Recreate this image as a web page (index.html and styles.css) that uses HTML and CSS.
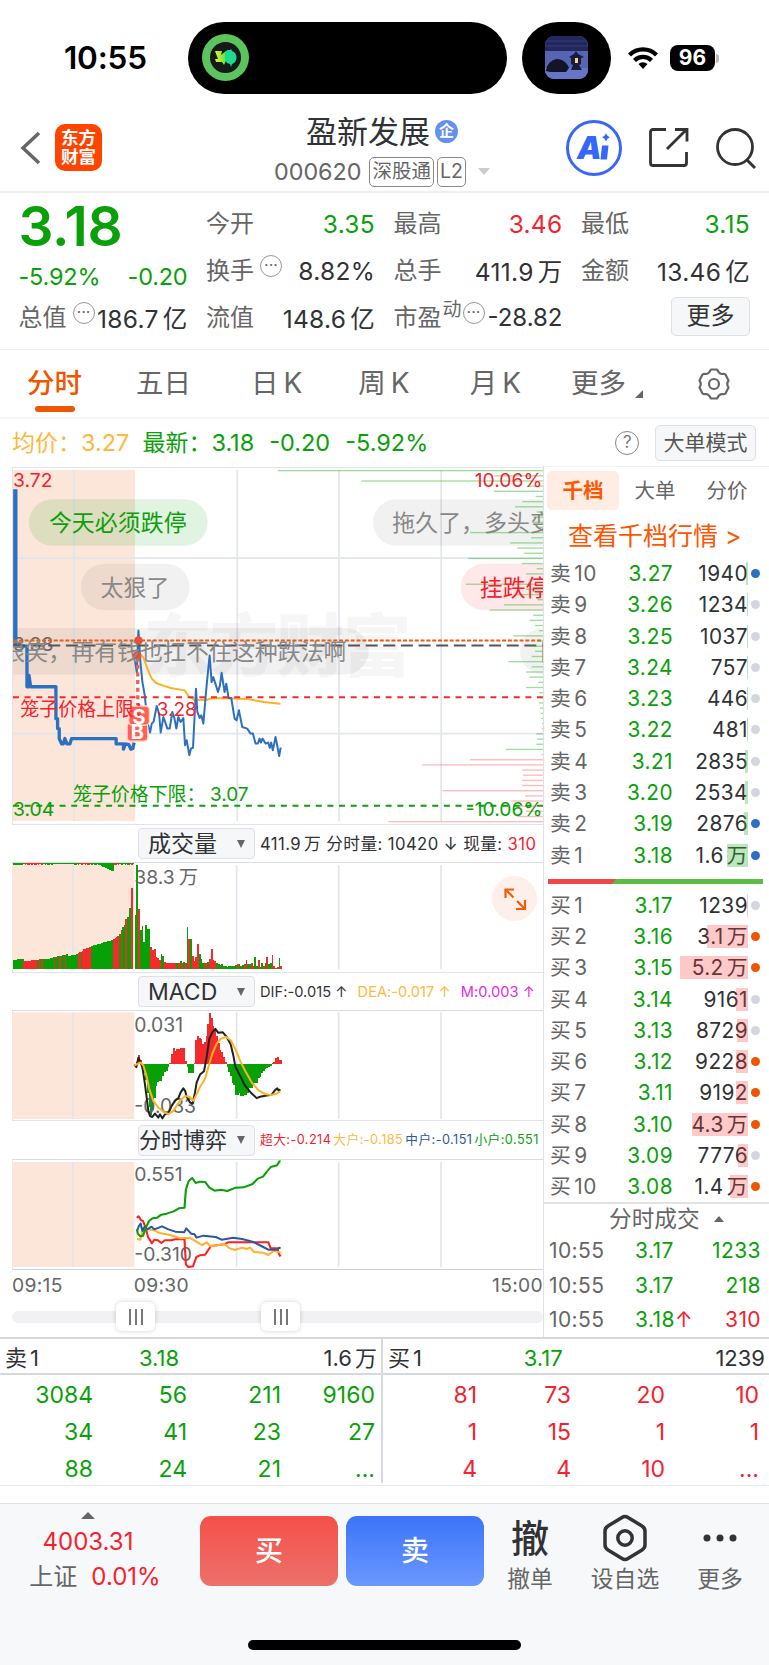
FILE: index.html
```html
<!DOCTYPE html>
<html lang="zh-CN">

<head>
    <meta charset="UTF-8">
    <meta name="viewport" content="width=device-width, initial-scale=1.0">
    <title>盈新发展 000620</title>
    <link rel="stylesheet" href="styles.css">
</head>

<body>
    <!-- Status bar -->
    <div class="status-bar">
        <span class="clock">10:55</span>
        <div class="island">
            <svg width="47" height="47" viewBox="0 0 47 47">
                <defs>
                    <linearGradient id="bolt" x1="0" x2="1">
                        <stop offset="0" stop-color="#e6f21c" />
                        <stop offset="1" stop-color="#5fe052" />
                    </linearGradient>
                </defs>
                <circle cx="23.500" cy="23.500" r="23.500" fill="#5cc45c" />
                <circle cx="23.500" cy="23.500" r="15.500" fill="#17181a" />
                <path d="M13 17h7l-1 4 5-4v10l-2 4-2-3h-6l-1-3h3z" fill="url(#bolt)" />
                <path d="M25 16h3l1-1 1 2c6 2 6 11 0 13l-1 3-1-3-3-1-2-3v-7z" fill="#1fdc8c" />
            </svg>
        </div>
        <div class="island-small">
            <svg width="43" height="43" viewBox="0 0 43 43">
                <defs>
                    <clipPath id="thumb"><rect width="43" height="43" rx="9" /></clipPath>
                </defs>
                <g clip-path="url(#thumb)">
                    <rect width="43" height="43" fill="#5565b4" />
                    <rect width="43" height="15" fill="#22285c" />
                    <path d="M0 5h43M0 10h43" stroke="#343b78" />
                    <rect y="32" width="43" height="11" fill="#6675c6" />
                    <path d="M1 35c1-7 5-11 11-12 6 0 10 4 12 9l-3 4H5z" fill="#131526" />
                    <path d="M24 21l5-3 2-3 2 3 6 3-3 1v6l-2 1 3 5h-11l2-5-2-1v-6z" fill="#191b3a" />
                    <rect x="30" y="22" width="3" height="5" fill="#ffcf87" />
                </g>
            </svg>
        </div>
        <svg class="wifi" width="32" height="24" viewBox="0 0 32 24">
            <path d="M2.500 9a19 19 0 0 1 27 0M7.500 14.500a12 12 0 0 1 17 0" fill="none" stroke="#000" stroke-width="4.200" />
            <path d="M16 23l-4.500-5a6.500 6.500 0 0 1 9 0z" />
        </svg>
        <span class="battery">96</span>
        <span class="battery-tip"></span>
    </div>

    <!-- Stock header -->
    <div class="header">
        <svg class="back" width="22" height="36" viewBox="0 0 22 36">
            <path d="M19 3L3 18l16 15" fill="none" stroke="#666" stroke-width="3.500" />
        </svg>
        <div class="logo">东方<br>财富</div>
        <div class="title-box">
            <div class="title">盈新发展<span class="badge">企</span></div>
            <div class="code">000620<span class="tag">深股通</span><span class="tag tag-l2">L2</span><i class="tri-down light"></i></div>
        </div>
        <svg width="56" height="56" viewBox="0 0 56 56">
            <circle cx="28" cy="28" r="26.500" fill="none" stroke="#3767fa" stroke-width="3" />
            <text class="ai" x="11" y="38.500">A</text>
            <path d="M36 25.500h6.500l-1.500 14H34.500z" fill="#3767fa" />
            <path d="M40 13q1 3.500 4 4-3 1-4 4.500-1-3.500-4-4.500 3-.500 4-4z" fill="#3767fa" />
        </svg>
        <svg class="share" width="42" height="42" viewBox="0 0 42 42">
            <path d="M18 2.500H5Q2.500 2.500 2.500 5v31q0 2.500 2.500 2.500h31q2.500 0 2.500-2.500V25M27 2.500h12v12M38 3L19 22" fill="none" stroke="#333" stroke-width="2.800" />
        </svg>
        <svg class="search" width="44" height="44" viewBox="0 0 44 44">
            <circle cx="20" cy="21" r="17.500" fill="none" stroke="#333" stroke-width="2.800" />
            <path d="M32 34l8 8" stroke="#333" stroke-width="3" />
        </svg>
    </div>

    <!-- Quote summary -->
    <div class="quote">
        <div class="quote-col">
            <div class="last-price">3.18</div>
            <div class="item change green"><span>-5.92%</span><span>-0.20</span></div>
            <div class="item"><label>总值<i class="dots near">···</i></label><span>186.7<em>亿</em></span></div>
        </div>
        <div class="quote-col">
            <div class="item"><label>今开</label><span class="green">3.35</span></div>
            <div class="item"><label>换手<i class="dots">···</i></label><span>8.82%</span></div>
            <div class="item"><label>流值</label><span>148.6<em>亿</em></span></div>
        </div>
        <div class="quote-col">
            <div class="item"><label>最高</label><span class="red">3.46</span></div>
            <div class="item"><label>总手</label><span>411.9<em>万</em></span></div>
            <div class="item"><label>市盈<sup>动</sup><i class="dots">···</i></label><span class="pe">-28.82</span></div>
        </div>
        <div class="quote-col">
            <div class="item"><label>最低</label><span class="green">3.15</span></div>
            <div class="item"><label>金额</label><span>13.46<em>亿</em></span></div>
            <div class="item more-item"><button class="more-btn">更多</button></div>
        </div>
    </div>

    <!-- Period tabs -->
    <div class="tabs">
        <span class="tab active">分时</span>
        <span class="tab">五日</span>
        <span class="tab">日<b>K</b></span>
        <span class="tab">周<b>K</b></span>
        <span class="tab">月<b>K</b></span>
        <span class="tab">更多<i class="corner"></i></span>
        <svg width="34" height="34" viewBox="0 0 34 34">
            <path d="M14 2.500h6q2 4 4.500 4.500 3-.5 4 .5l3 6q-2.500 3.500 0 7l-3 6q-1 1-4 .5-2.500.5-4.500 4.500h-6q-2-4-4.500-4.500-3 .5-4-.5l-3-6q2.500-3.500 0-7l3-6q1-1 4-.5 2.500-.5 4.500-4.500z" fill="none" stroke="#666" stroke-width="2.200" stroke-linejoin="round" />
            <circle cx="17" cy="17" r="5" fill="none" stroke="#666" stroke-width="2.200" />
        </svg>
    </div>

    <div class="info-row">
        <span class="yellow">均价：<b>3.27</b></span>
        <span class="green latest">最新：<b>3.18</b><b>-0.20</b><b>-5.92%</b></span>
        <span class="help">?</span>
        <button class="mode-btn">大单模式</button>
    </div>

    <div class="main">
        <div class="charts">
            <!-- Price chart -->
            <svg class="price-chart" viewBox="36 36 1593 1071" preserveAspectRatio="none">
                <rect class="shade" x="36" y="42" width="367" height="1056" />
                <g class="grid">
                    <path d="M219 42V1098M710 42V1098M1016 42V1098M1323 42V1098M36 307H1629M36 835H1629" />
                </g>
                <text class="watermark" x="428" y="646" textLength="805">东方财富</text>
                <g class="bullets">
                    <rect class="pill-green" x="84" y="130" width="537" height="140" rx="70" />
                    <rect class="pill-gray" x="240" y="324" width="327" height="140" rx="70" />
                    <rect class="pill-gray" x="-80" y="517" width="1185" height="140" rx="70" />
                    <rect class="pill-gray" x="1118" y="130" width="700" height="140" rx="70" />
                    <rect class="pill-red" x="1382" y="324" width="400" height="140" rx="70" />
                    <rect class="pill-gray" x="1560" y="517" width="400" height="140" rx="70" />
                </g>
                <text class="axis gray" x="36" y="588">3.38</text>
                <path class="avg-line" d="M404 598L418 596L428 606L440 640L452 668L465 682L485 690L510 698L552 705L565 724L580 733L615 734L640 728L740 731L790 740L840 745" />
                <path class="pre-line first" d="M43 100V572" />
                <path class="pre-line" d="M43 572H78V694H84V660L89 694H165V790H170V820H175V850L182 866H187L192 850L198 866H207L212 850H346V866H368V882L374 866L384 868L390 882L396 880L400 862" />
                <path class="price-line" d="M403 618L408 650L413 525L419 620L425 680L432 720L440 800L448 832L453 805L459 798L468 752L475 775L480 832L488 785L494 802L500 820L507 820L515 770L521 788L527 820L533 785L540 800L548 788L553 870L558 855L566 900L571 880L577 878L586 700L590 770L597 788L602 780L608 805L618 690L627 600L633 680L638 665L646 690L652 710L658 690L663 652L668 685L672 710L677 685L684 728L692 728L702 790L708 795L715 765L725 815L740 820L750 835L757 835L765 865L772 865L777 850L781 862L786 850L795 865L803 862L808 878L812 862L817 885L821 866L825 845L829 865L836 903L840 880H843" />
                <path d="M36 570H1629" stroke="#555" stroke-width="6" stroke-dasharray="36 17" />
                <path d="M36 555H1629" stroke="#ee5a10" stroke-width="6" stroke-dasharray="12 5.500" />
                <path d="M36 726H1629" stroke="#f02a30" stroke-width="6" stroke-dasharray="18 17" />
                <path d="M36 1052H1629" stroke="#0aa00a" stroke-width="6" stroke-dasharray="18 17" />
                <path d="M411 605V760" stroke="#f06050" stroke-width="10" stroke-dasharray="12 11" />
                <circle cx="413" cy="555" r="13" fill="#e8503e" />
                <circle cx="409" cy="600" r="13" fill="#e8503e" />
                <g class="mark">
                    <rect x="379" y="803" width="62" height="55" rx="12" />
                    <rect x="384" y="752" width="62" height="58" rx="12" />
                    <text x="410" y="851">B</text>
                    <text x="415" y="805">S</text>
                </g>
                <g id="depth"></g>
                <g class="bullet-text">
                    <text class="green" x="144" y="226">今天必须跌停</text>
                    <text x="299" y="420">太狠了</text>
                    <text x="4" y="613">很笑，再有钱也扛不住这种跌法啊</text>
                    <text x="1176" y="226">拖久了，多头变</text>
                    <text class="red" x="1439" y="420">挂跌停</text>
                    <text x="1616" y="613">目</text>
                </g>
                <text class="axis red" x="36" y="94">3.72</text>
                <text class="axis red" x="1627" y="94" text-anchor="end">10.06%</text>
                <text class="axis green" x="36" y="1082">3.04</text>
                <text class="axis green" x="1627" y="1082" text-anchor="end">-10.06%</text>
                <text class="limit red" x="58" y="783">笼子价格上限：<tspan x="468">3.28</tspan></text>
                <text class="limit green" x="216" y="1038">笼子价格下限：<tspan x="628">3.07</tspan></text>
            </svg>

            <!-- Volume -->
            <div class="sub-head">
                <span class="select"><span>成交量</span><i class="tri-down"></i></span>
                <span class="sub-info vol-info">411.9<em>万</em> 分时量: 10420 ↓ 现量: <b class="red">310</b></span>
            </div>
            <div class="sub-chart vol-chart">
                <svg viewBox="36 126 1593 333" preserveAspectRatio="none">
                    <rect class="shade" x="36" y="126" width="367" height="324" />
                    <path class="grid" d="M219 132V450M710 132V450M1016 132V450M1323 132V450" />
                    <g id="volume" shape-rendering="crispEdges"></g>
                    <text class="axis gray" x="403" y="190">38.3<tspan dx="12">万</tspan></text>
                </svg>
                <div class="expand">
                    <svg width="24" height="24" viewBox="0 0 24 24">
                        <path d="M2.500 11V2.500H11M3 3l7.500 7.500M22 13v9h-9M21.500 21.500L14 14" fill="none" stroke="#f25a0c" stroke-width="2.200" />
                    </svg>
                </div>
            </div>

            <!-- MACD -->
            <div class="sub-head">
                <span class="select"><span>MACD</span><i class="tri-down"></i></span>
                <span class="sub-info macd-info"><span>DIF:-0.015 ↑</span><span class="yellow">DEA:-0.017 ↑</span><span class="magenta">M:0.003 ↑</span></span>
            </div>
            <div class="sub-chart macd-chart">
                <svg viewBox="36 573 1593 324" preserveAspectRatio="none">
                    <rect class="shade" x="36" y="577" width="367" height="317" />
                    <path class="grid" d="M219 577V894M710 577V894M1016 577V894M1323 577V894" />
                    <g id="macd" shape-rendering="crispEdges"></g>
                    <text class="axis gray" x="403" y="634">0.031</text>
                    <text class="axis gray" x="403" y="876">-0.033</text>
                    <path class="line" stroke="#222" d="M403 732L409 740L415 712L422 725L428 745L434 785L440 830L445 870L450 885L457 888L465 878L475 890L480 880L487 892L495 880L505 878L515 855L525 840L535 832L542 815L550 803L556 812L560 828L570 845L578 848L585 815L590 785L600 762L612 752L620 710L628 655L638 635L646 626L655 638L668 636L680 650L692 672L700 705L706 738L720 765L735 795L752 815L770 832L780 828L800 824L815 822L825 808L832 803L836 810L841 806" />
                    <path class="line" stroke="#ffb21f" d="M403 735L412 730L422 726L430 735L440 768L448 805L460 840L475 860L490 872L505 880L520 870L540 840L555 826L568 828L580 840L590 820L602 795L615 775L625 740L637 700L650 670L662 656L678 650L692 660L708 690L722 725L738 755L755 785L775 808L795 820L812 823L828 820L841 812" />
                </svg>
            </div>

            <!-- Capital flow -->
            <div class="sub-head flow-head">
                <span class="select tight"><span>分时博弈</span><i class="tri-down"></i></span>
                <span class="sub-info flow-info"><span class="red">超大:-0.214</span><span class="yellow">大户:-0.185</span><span class="blue">中户:-0.151</span><span class="green">小户:0.551</span></span>
            </div>
            <div class="sub-chart flow-chart">
                <svg viewBox="36 147 1593 327" preserveAspectRatio="none">
                    <rect class="shade" x="36" y="153" width="367" height="315" />
                    <path class="grid" d="M219 153V468M710 153V468M1016 153V468M1323 153V468" />
                    <text class="axis gray" x="403" y="210">0.551</text>
                    <text class="axis gray" x="403" y="451">-0.310</text>
                    <g transform="scale(1.0522 1)">
                        <path class="line" stroke="#ff2020" d="M390 320L395 316L402 328L408 330L415 350L422 378L433 397L440 386L450 388L460 396L470 388L488 388L500 385L526 384L530 460L537 468L550 466L560 438L570 433L585 431L595 415L602 405L640 400L650 394H765L772 412H790L796 430L800 436" />
                        <path class="line" stroke="#ffb22c" d="M391 384L400 386L405 365L412 350L420 355L440 358L455 366L475 370L495 375L515 382L540 380L560 392L575 402L590 394L600 406L620 403L640 399L655 412L670 417L690 410L705 414L712 409L725 423L750 425L765 432L780 420L800 424" />
                        <path class="line" stroke="#2b59a0" d="M391 360L396 345L401 338L406 360L412 348L420 355L432 347L440 355L462 346L480 355L500 362L525 364L531 352L545 368L555 370L560 380L580 374L615 378L632 386L665 380L690 384L720 392L745 405L765 416L792 416L795 410L800 412" />
                        <path class="line" stroke="#07a007" d="M390 355L393 368L400 376L408 374L415 352L425 330L435 322L448 320L460 311L475 308L495 301L510 292L526 290L530 236L538 210L548 201L558 216L570 212L585 213L597 230L612 239L630 236L648 240L672 230L695 229L720 219L735 203L750 197L760 183L772 168L790 163L797 151L800 151" />
                    </g>
                </svg>
            </div>
            <div class="times"><span>09:15</span><span class="open">09:30</span><span class="close">15:00</span></div>
            <div class="slider">
                <div class="track"></div>
                <span class="handle handle-l"><i></i><i></i><i></i></span>
                <span class="handle handle-r"><i></i><i></i><i></i></span>
            </div>
        </div>

        <!-- Order book -->
        <div class="side">
            <div class="side-tabs"><span class="on">千档</span><span>大单</span><span>分价</span></div>
            <div class="side-link">查看千档行情 &gt;</div>
            <div id="asks"></div>
            <svg class="ratio" width="215" height="5" viewBox="0 0 215 5">
                <rect width="215" height="5" fill="#5bbd45" />
                <path d="M0 0h68l-4 5H0z" fill="#ef4648" />
            </svg>
            <div id="bids"></div>
            <div class="deals">
                <div class="deals-head">分时成交<i class="tri-up"></i></div>
                <div class="deal green"><span>10:55</span><b>3.17</b><em>1233</em></div>
                <div class="deal green"><span>10:55</span><b>3.17</b><em>218</em></div>
                <div class="deal red"><span>10:55</span><b class="green">3.18<i class="red">↑</i></b><em>310</em></div>
            </div>
        </div>
    </div>

    <!-- Queue detail -->
    <div class="queue">
        <div class="queue-side green">
            <div class="queue-head"><span>卖<u>1</u></span><b class="green">3.18</b><em>1.6<u>万</u></em></div>
            <div class="queue-grid">
                <span>3084</span><span>56</span><span>211</span><span>9160</span>
                <span>34</span><span>41</span><span>23</span><span>27</span>
                <span>88</span><span>24</span><span>21</span><span>...</span>
            </div>
        </div>
        <div class="queue-side red">
            <div class="queue-head"><span>买<u>1</u></span><b class="green">3.17</b><em>1239</em></div>
            <div class="queue-grid">
                <span>81</span><span>73</span><span>20</span><span>10</span>
                <span>1</span><span>15</span><span>1</span><span>1</span>
                <span>4</span><span>4</span><span>10</span><span>...</span>
            </div>
        </div>
    </div>

    <!-- Bottom bar -->
    <div class="footer">
        <div class="actions">
            <div class="index">
                <i class="tri-up big"></i>
                <div class="index-value red">4003.31</div>
                <div class="index-row"><span>上证</span><span class="red">0.01%</span></div>
            </div>
            <button class="trade buy">买</button>
            <button class="trade sell">卖</button>
            <div class="action"><strong>撤</strong><span>撤单</span></div>
            <div class="action watch">
                <svg width="44" height="48" viewBox="0 0 44 48">
                    <path d="M19 3.500q3-2 6 0l14 8.500q3 2 3 5v14q0 3-3 5l-14 8.500q-3 2-6 0L5 36q-3-2-3-5V17q0-3 3-5z" fill="none" stroke="#333" stroke-width="3.500" />
                    <circle cx="22" cy="24" r="7.200" fill="none" stroke="#333" stroke-width="3.500" />
                </svg>
                <span>设自选</span>
            </div>
            <div class="action">
                <svg width="44" height="48" viewBox="0 0 44 48" fill="#333">
                    <circle cx="9" cy="24" r="3.500" /><circle cx="22" cy="24" r="3.500" /><circle cx="35" cy="24" r="3.500" />
                </svg>
                <span>更多</span>
            </div>
        </div>
        <div class="home-bar"></div>
    </div>

    <script src="app.js"></script>
</body>

</html>
```

FILE: styles.css
```css
* {
    box-sizing: border-box;
}

body {
    margin: 0;
    width: 769px;
    height: 1665px;
    overflow: hidden;
    background: #fff;
    color: #303236;
    font-family: Inter, "Noto Sans CJK SC", sans-serif;
}

i, em {
    font-style: normal;
}

b {
    font-weight: normal;
}

u {
    text-decoration: none;
}

svg {
    display: block;
    flex: none;
}

button {
    font-family: inherit;
    padding: 0;
    border: 1.5px solid #dde0e6;
    border-radius: 5px;
    background: #f6f7f9;
    color: #333;
}

.red {
    color: #f5222d;
    fill: #f5222d;
}

.green {
    color: #0aa00a;
    fill: #0aa00a;
}

.yellow {
    color: #ffb83e;
}

.blue {
    color: #2b59a0;
}

.magenta {
    color: #e52be5;
}

.tri-down {
    border: 6.5px solid transparent;
    border-top: 8px solid #666;
    border-bottom: 0;
}

.tri-down.light {
    border-top: 7px solid #ccc;
}

.tri-up {
    border: 5px solid transparent;
    border-bottom: 6px solid #666;
    border-top: 0;
}

.tri-up.big {
    border-width: 0 7px 7px;
}

/* status bar */
.status-bar {
    display: flex;
    align-items: center;
    height: 116px;
    padding-left: 64px;
}

.clock {
    width: 124px;
    color: #000;
    font-size: 31.5px;
    font-weight: 600;
    line-height: 1;
    letter-spacing: -0.2px;
}

.island {
    width: 319px;
    height: 72px;
    border-radius: 36px;
    background: #000;
    padding: 12px 14px;
}

.island-small {
    width: 89px;
    height: 72px;
    margin-left: 15px;
    border-radius: 36px;
    background: #000;
    padding: 14px 23px;
}

.wifi {
    margin-left: 16px;
}

.battery {
    width: 45px;
    height: 26px;
    margin-left: 11px;
    border-radius: 8px;
    background: #000;
    color: #fff;
    font-size: 21px;
    font-weight: 700;
    line-height: 26px;
    text-align: center;
}

.battery-tip {
    width: 3px;
    height: 9px;
    margin-left: 1px;
    border-radius: 0 3px 3px 0;
    background: #bbb;
}

/* header */
.header {
    display: flex;
    align-items: center;
    height: 77px;
    padding: 0 0 12px 20px;
    border-bottom: 2px solid #eee;
}

.logo {
    width: 47px;
    height: 47px;
    margin-left: 13px;
    padding-top: 4px;
    border-radius: 10px;
    background: #ff4400;
    color: #fff;
    font-size: 17.5px;
    font-weight: 700;
    line-height: 19px;
    text-align: center;
    flex: none;
}

.title-box {
    width: 464px;
    padding-left: 172px;
    flex: none;
}

.title {
    display: flex;
    align-items: center;
    height: 38px;
    margin-top: 8px;
    font-size: 31px;
    white-space: nowrap;
    line-height: 38px;
    padding-left: 32px;
}

.badge {
    width: 23px;
    height: 23px;
    margin-left: 5px;
    border-radius: 50%;
    background: #6590ec;
    color: #fff;
    font-size: 15px;
    font-weight: 700;
    line-height: 22px;
    text-align: center;
}

.code {
    display: flex;
    align-items: center;
    height: 38px;
    margin-top: 2px;
    font-size: 23.3px;
    color: #666;
}

.tag {
    height: 30px;
    margin-left: 8px;
    padding: 0 2px;
    border: 1.5px solid #888;
    border-radius: 5px;
    font-size: 19.5px;
    line-height: 27px;
    white-space: nowrap;
}

.tag-l2 {
    margin-left: 3px;
}

.code .tri-down {
    margin-left: 12px;
}

.ai {
    font-size: 31px;
    font-weight: 900;
    font-style: italic;
    fill: #3767fa;
}

.share {
    margin-left: 26px;
}

.search {
    margin-left: 25px;
}

/* quote */
.quote {
    display: flex;
    gap: 19px;
    height: 157px;
    padding: 7px 18px 0 19px;
    border-bottom: 1.5px solid #f0f0f2;
}

.quote-col {
    width: 169px;
    margin-left: -0.5px;
}

.item {
    display: flex;
    justify-content: space-between;
    align-items: center;
    height: 47px;
    font-size: 24.5px;
    letter-spacing: 0.3px;
    white-space: nowrap;
}

.item label {
    display: flex;
    font-size: 24px;
    line-height: 36px;
    letter-spacing: 0;
    color: #666;
}

.item em {
    margin-left: 4px;
}

.item sup {
    font-size: 19px;
    line-height: 20px;
    margin-left: 1px;
}

.item .pe {
    font-size: 24px;
    letter-spacing: 0;
}

.dots {
    width: 22px;
    height: 22px;
    margin: 2px 0 0 6px;
    border: 1.5px solid #999;
    border-radius: 50%;
    font-size: 16px;
    line-height: 19px;
    text-align: center;
}

sup + .dots {
    margin-left: 1px;
}

.dots.near {
    margin-right: -6px;
}

.last-price {
    height: 47px;
    color: #0aa00a;
    font-size: 55px;
    font-weight: 600;
    line-height: 53px;
    letter-spacing: -0.2px;
}

.change {
    padding-top: 12px;
    font-size: 23.5px;
    letter-spacing: -0.2px;
}

.more-item {
    justify-content: flex-end;
}

.more-btn {
    width: 79px;
    height: 39px;
    margin-top: -3px;
    font-size: 24px;
    line-height: 34px;
}

/* tabs */
.tabs {
    display: flex;
    align-items: center;
    height: 69px;
    padding-left: 27px;
    border-bottom: 2px solid #f4f4f6;
    font-size: 27.5px;
    color: #666;
}

.tab {
    position: relative;
    height: 67px;
    line-height: 66px;
    margin-right: 54px;
    white-space: nowrap;
}

.tab:nth-child(2) {
    margin-right: 60px;
}

.tab:nth-child(3) {
    margin-right: 56px;
}

.tab:nth-child(4) {
    margin-right: 60px;
}

.tab:nth-child(5) {
    margin-right: 50px;
}

.tab:nth-child(6) {
    margin-right: 71px;
}

.tab b {
    margin-left: 5px;
    font-size: 28px;
}

.tab.active {
    color: #f05500;
    font-weight: 500;
}

.tab.active::after {
    content: "";
    position: absolute;
    left: 8px;
    bottom: 5px;
    width: 40px;
    height: 6px;
    border-radius: 3px;
    background: #f05500;
}

.corner {
    position: absolute;
    right: -17px;
    bottom: 19px;
    border-left: 8px solid transparent;
    border-bottom: 8px solid #666;
}

.info-row {
    display: flex;
    align-items: center;
    height: 47px;
    padding-left: 12px;
    font-size: 23px;
    line-height: 36px;
    white-space: nowrap;
}

.info-row b {
    font-size: 23.5px;
}

.info-row b + b {
    margin-left: 15px;
}

.latest {
    margin-left: 13px;
    width: 473px;
}

.help {
    width: 24px;
    height: 24px;
    border: 1.5px solid #888;
    border-radius: 50%;
    color: #777;
    font-size: 17px;
    line-height: 21px;
    text-align: center;
}

.mode-btn {
    width: 101px;
    height: 36px;
    margin-left: auto;
    margin-right: 13px;
    font-size: 21px;
    line-height: 31px;
    color: #555;
}

/* charts */
.main {
    display: flex;
    height: 871px;
}

.charts {
    width: 532px;
    margin-left: 12px;
    padding-top: 1px;
    border-right: 1.5px solid #dfe1e6;
}

.price-chart {
    width: 531px;
    height: 358px;
    border: solid #e2e4e9;
    border-width: 1.5px 0 1.5px 1px;
}

.shade {
    fill: #fce6da;
}

.grid {
    fill: none;
    stroke: #e1e5ec;
    stroke-width: 5;
}

.watermark {
    font-size: 205px;
    font-weight: 900;
    fill: #000;
    opacity: 0.03;
}

.axis {
    font-size: 58px;
}

.axis.gray {
    fill: #666;
}

.limit {
    font-size: 57px;
}

.bullet-text {
    font-size: 69px;
    fill: #888;
}

.pill-green {
    fill: #0aa00a;
    opacity: 0.12;
}

.pill-gray {
    fill: #000;
    opacity: 0.055;
}

.pill-red {
    fill: #f5222d;
    opacity: 0.1;
}

.avg-line, .price-line, .pre-line, .line {
    fill: none;
    stroke-width: 6;
    stroke-linejoin: round;
}

.avg-line {
    stroke: #ffb21f;
}

.price-line {
    stroke: #2d70bf;
}

.pre-line {
    stroke: #2d70bf;
    stroke-width: 10;
}

.pre-line.first {
    stroke-width: 13;
}

.mark rect {
    fill: #ff6253;
    stroke: #ffd8d0;
    stroke-width: 4;
}

.mark text {
    fill: #fff;
    font-size: 60px;
    font-weight: 700;
    text-anchor: middle;
}

.sub-head {
    display: flex;
    align-items: center;
    height: 38px;
    padding-left: 126px;
    border-bottom: 1.5px solid #d9dce2;
    white-space: nowrap;
}

.flow-head {
    height: 39px;
}

.select {
    display: flex;
    align-items: center;
    justify-content: space-between;
    width: 117px;
    height: 31px;
    padding: 0 9px;
    border: 1.5px solid #dde0e6;
    border-radius: 4px;
    background: #f6f7f9;
    font-size: 23px;
    line-height: 28px;
}

.select.tight {
    padding-left: 0;
    font-size: 22px;
}

.select .tri-down {
    border-width: 8px 4.5px 0;
}

.sub-info {
    display: flex;
    margin-left: 5px;
    line-height: 28px;
}

.vol-info {
    display: block;
    width: 282px;
    font-size: 16.7px;
    letter-spacing: 0.4px;
}

.vol-info em {
    margin-left: 3px;
}

.macd-info {
    gap: 10px;
    font-size: 14.6px;
    letter-spacing: 0.05px;
}

.flow-info {
    gap: 2px;
    font-size: 12.7px;
    letter-spacing: 0.45px;
}

.sub-chart {
    position: relative;
    height: 110px;
    border-bottom: 1.5px solid #e2e4e9;
    border-left: 1px solid #e2e4e9;
}

.flow-chart {
    border-bottom-color: #d0d3d9;
}

.sub-chart > svg {
    width: 531px;
    height: 100%;
    margin-left: -1px;
}

.expand {
    position: absolute;
    right: 6px;
    top: 13px;
    width: 45px;
    height: 45px;
    padding: 10.5px;
    border-radius: 50%;
    background: #fdf0ea;
}

.times {
    display: flex;
    height: 31px;
    font-size: 19.3px;
    line-height: 30px;
    letter-spacing: 0.3px;
    color: #666;
}

.open {
    margin-left: 71px;
}

.close {
    margin-left: auto;
}

.slider {
    position: relative;
    padding-top: 10px;
}

.track {
    height: 12px;
    border-radius: 6px;
    background: #f1f1f4;
}

.handle {
    position: absolute;
    top: 1px;
    display: flex;
    justify-content: center;
    align-items: center;
    gap: 4px;
    width: 39px;
    height: 29px;
    border-radius: 6px;
    background: #fff;
    box-shadow: 0 0 5px rgba(0, 0, 0, 0.18);
}

.handle i {
    width: 2px;
    height: 16px;
    background: #777;
}

.handle-l {
    left: 104px;
}

.handle-r {
    left: 249px;
}

/* order book */
.side {
    width: 225px;
    border-top: 1.5px solid #f0f0f2;
}

.side-tabs {
    display: flex;
    margin: 4px 0 0 3px;
    font-size: 20.5px;
    line-height: 39px;
    color: #666;
    text-align: center;
}

.side-tabs span {
    width: 72px;
}

.side-tabs .on {
    border-radius: 5px;
    background: #ffece3;
    color: #ff5500;
    font-weight: 700;
}

.side-link {
    height: 48px;
    padding-left: 24px;
    font-size: 25px;
    line-height: 53px;
    color: #ff5500;
    white-space: nowrap;
}

.order {
    display: flex;
    align-items: center;
    height: 31.27px;
    padding-left: 6px;
    font-size: 20.8px;
    line-height: 29px;
    letter-spacing: 0.45px;
}

.order .name {
    width: 62px;
    color: #666;
}

.order .name u {
    margin-left: 3px;
}

.order .price {
    width: 61px;
    text-align: right;
}

.order .amount {
    position: relative;
    width: 75px;
    text-align: right;
}

.order .amount u {
    margin-left: 3px;
}

/* translucent volume bar over the number */
.bar {
    position: absolute;
    right: 0;
    top: 3px;
    height: 23px;
    background: rgba(60, 185, 60, 0.34);
}

.bar.buy-bar {
    background: rgba(250, 60, 60, 0.28);
}

.dot {
    width: 9px;
    height: 9px;
    margin-left: 3px;
    border-radius: 50%;
    background: #d3d6dc;
}

.dot.s {
    background: #2d70bf;
}

.dot.b {
    background: #f05500;
}

.ratio {
    margin: 8px 0 6px 4px;
}

.deals {
    border-top: 2px solid #dfe1e6;
    padding-left: 5px;
}

.deals-head {
    display: flex;
    align-items: center;
    gap: 14px;
    height: 30px;
    padding-left: 60px;
    font-size: 22.7px;
    line-height: 30px;
    color: #666;
}

.deal {
    display: flex;
    height: 34.3px;
    font-size: 21px;
    line-height: 34px;
    letter-spacing: 0.4px;
}

.deal span {
    width: 86px;
    color: #666;
}

.deal b {
    width: 56px;
    white-space: nowrap;
}

.deal em {
    width: 70px;
    text-align: right;
}

/* queue */
.queue {
    display: flex;
    height: 149px;
    border-top: 2px solid #d5d8dd;
    border-bottom: 1.5px solid #e8e8ec;
}

.queue-side {
    width: 383px;
    height: 144px;
    border-right: 2px solid #d5d8dd;
}

.queue-side + .queue-side {
    width: 386px;
    border: 0;
}

.queue-head {
    display: grid;
    grid-template-columns: 1fr 1fr 1fr;
    height: 36px;
    padding: 1px 4px 0 5px;
    border-bottom: 2px solid #d5d8dd;
    font-size: 22px;
    line-height: 36px;
}

.queue-head span, .queue-head em {
    color: #303236;
}

.queue-head b {
    padding-left: 10px;
}

.queue-head u {
    margin-left: 3px;
}

.queue-head em {
    text-align: right;
}

.queue-grid {
    display: grid;
    grid-template-columns: 93px repeat(3, 94px);
    padding-top: 2px;
    font-size: 23px;
    line-height: 37px;
    text-align: right;
}

.queue-side + .queue-side .queue-grid {
    padding-left: 1px;
}

/* footer */
.footer {
    height: 163px;
    margin-top: 17px;
    border-top: 1.5px solid #dfe1e6;
    background: #f7f8fa;
}

.actions {
    display: flex;
    height: 136px;
    padding-top: 8px;
}

.index {
    display: flex;
    flex-direction: column;
    align-items: center;
    width: 176px;
    margin-right: 24px;
    font-size: 24px;
    line-height: 35px;
    white-space: nowrap;
}

.index-value {
    margin-top: 5px;
}

.index-row {
    display: flex;
    gap: 14px;
    padding-left: 14px;
    color: #666;
}

.trade {
    width: 138px;
    height: 70px;
    margin: 4px 8px 0 0;
    border: 0;
    border-radius: 11px;
    color: #fff;
    font-size: 28px;
    font-weight: 500;
    line-height: 70px;
}

.buy {
    background: linear-gradient(#f5504a, #ec716a);
}

.sell {
    background: linear-gradient(#3c74f8, #6a98ff);
}

.action {
    width: 76px;
    display: flex;
    flex-direction: column;
    align-items: center;
    padding-top: 2px;
    font-size: 22.8px;
    line-height: 34px;
    color: #666;
}

.action strong {
    height: 48px;
    color: #303236;
    font-size: 38px;
    font-weight: 500;
    line-height: 48px;
}

.action span {
    white-space: nowrap;
}

.watch {
    width: 114px;
}

.home-bar {
    width: 273px;
    height: 10px;
    margin: 0 auto;
    border-radius: 5px;
    background: #000;
}
```

FILE: app.js
```js
const NS = "http://www.w3.org/2000/svg";
const RED = "#f52a2a";
const GREEN = "#07a007";

function addRect(parent, x, y, w, h, fill) {
    const r = document.createElementNS(NS, "rect");
    r.setAttribute("x", x);
    r.setAttribute("y", y);
    r.setAttribute("width", w);
    r.setAttribute("height", h);
    r.setAttribute("fill", fill);
    parent.appendChild(r);
}

// Order book: level, price, amount, bar width, dot
const asks = [
    [10, "3.27", "1940", 2.5, "s"], [9, "3.26", "1234", 1.5, ""], [8, "3.25", "1037", 1, ""],
    [7, "3.24", "757", 1, ""], [6, "3.23", "446", 0.7, ""], [5, "3.22", "481", 0.7, ""],
    [4, "3.21", "2835", 3.5, ""], [3, "3.20", "2534", 3, ""], [2, "3.19", "2876", 4, "s"],
    [1, "3.18", "1.6万", 21, "s"]
];
const bids = [
    [1, "3.17", "1239", 1.5, ""], [2, "3.16", "3.1万", 41, "b"], [3, "3.15", "5.2万", 68, "b"],
    [4, "3.14", "9161", 12, ""], [5, "3.13", "8729", 11.5, ""], [6, "3.12", "9228", 12.5, "b"],
    [7, "3.11", "9192", 12, "b"], [8, "3.10", "4.3万", 56.5, "b"], [9, "3.09", "7776", 10, ""],
    [10, "3.08", "1.4万", 18, "b"]
];

function renderOrders(id, name, rows, barClass) {
    document.getElementById(id).innerHTML = rows.map(([n, price, amount, bar, dot]) => `
        <div class="order">
            <span class="name">${name}<u>${n}</u></span>
            <span class="price green">${price}</span>
            <span class="amount">${amount.replace("万", "<u>万</u>")}<i class="bar ${barClass}" style="width:${bar}px"></i></span>
            <i class="dot ${dot}"></i>
        </div>`).join("");
}

renderOrders("asks", "卖", asks, "");
renderOrders("bids", "买", bids, "buy-bar");

// Depth lines along the right edge, top to bottom
const depth = [
    22, 673, 273, 770, 672, 797, 757, 735, 800, 790, 785, 800, 600, 783, 720, 742, 762, 595, 755, 800,
    768, 795, 587, 768, 735, 803, 702, 658, 790, 778, 795, 807, 730, 800, 780, 795, 785, 715, 785, 768,
    778, 805, 768, 807, 812, 807, 810, 812, 815, 816, 816, 799, 801, 799, 708, 814, 600, 455, 756, 759,
    756, 756, 517, 765, 722, 740, 768, 740, 355
];
const depthGroup = document.getElementById("depth");
depth.forEach((x, i) => {
    addRect(depthGroup, 810 + x, 42 + i * 15.53, 819 - x, 4, i < 55 ? "rgba(60,190,60,.5)" : "rgba(255,90,90,.42)");
});

// Call auction volume: from, to, start height, end height, colours
const volume = document.getElementById("volume");
const auction = [
    [38, 70, 28, 32, "g"], [70, 112, 24, 28, "r"], [112, 130, 29, 31, "gr"], [130, 158, 31, 33, "g"],
    [158, 204, 36, 46, "grgg"], [204, 234, 40, 46, "g"], [234, 250, 50, 56, "rrg"], [250, 274, 60, 70, "r"],
    [274, 340, 71, 90, "g"], [340, 358, 92, 104, "r"], [358, 362, 108, 108, "g"], [362, 367, 118, 118, "r"],
    [367, 375, 130, 138, "g"], [375, 380, 152, 152, "r"], [380, 387, 160, 160, "g"], [387, 392, 187, 187, "g"],
    [392, 399, 247, 247, "r"]
];
auction.forEach(([x1, x2, h1, h2, colors]) => {
    let n = 0;
    for (let x = x1; x < x2; x += 4) {
        const h = h1 + (h2 - h1) * (x - x1) / (x2 - x1);
        addRect(volume, x, 450 - h, Math.min(4, x2 - x) + 0.5, h, colors[n++ % colors.length] === "r" ? RED : GREEN);
    }
});

// Unmatched volume hanging from the top
for (let x = 38; x < 400; x += 4) {
    let h = x < 70 ? 6 : x > 295 && x < 340 ? 6 + (x - 295) * 0.46 : 3 + (x * 7 % 5);
    const red = (x > 70 && x < 130) || (x > 234 && x < 270) || (x > 340 && x < 358) || x > 390;
    if (x > 160 && x < 215) h = 3;
    addRect(volume, x, 126, 4, h, red ? RED : GREEN);
}

const vol = [
    165, 318, -183, 118, 133, 82, 136, 123, 123, -66, -58, -62, -36, -33, -28, 45, 40, -22, -20, -20, -18,
    -19, -20, -18, 19, -20, 26, -18, 22, -20, 130, -92, 92, -40, -25, -38, -78, 45, 30, 17, -17, -17, 22,
    -32, -62, -28, -25, 17, 14, -12, 14, 10, 9, 6, 10, 10, 10, 9, 12, -15, 14, 8, 12, -14, -28, 14, 14, -20,
    -10, 38, 10, -28, 6, 20, -10, 18, -36, 14, 20, -42, -8, 4, -6, 33, -8
];
vol.forEach((v, i) => {
    addRect(volume, 404 + i * 5.2, 450 - Math.abs(v), 5.3, Math.abs(v), v < 0 ? RED : GREEN);
});

const hist = [
    0, 6, 28, 12, -8, -25, -45, -85, -125, -150, -135, -100, -65, -52, -48, -50, -35, -22, -18, -6, 5, 32,
    48, 40, 45, 45, 50, 48, 50, 10, -8, -25, -25, -24, 4, 72, 84, 80, 75, 62, 68, 85, 120, 152, 138, 115,
    105, 85, 65, 42, 38, 22, 8, -6, -22, -35, -55, -62, -90, -92, -85, -95, -95, -90, -92, -85, -70, -70,
    -60, -55, -54, -40, -36, -25, -18, -12, -10, -8, -4, 3, 8, 20, 22, 12, 12
];
const macd = document.getElementById("macd");
hist.forEach((v, i) => {
    addRect(macd, 404 + i * 5.2, v > 0 ? 732 - v : 732, 5.3, Math.abs(v), v > 0 ? RED : GREEN);
});
```
